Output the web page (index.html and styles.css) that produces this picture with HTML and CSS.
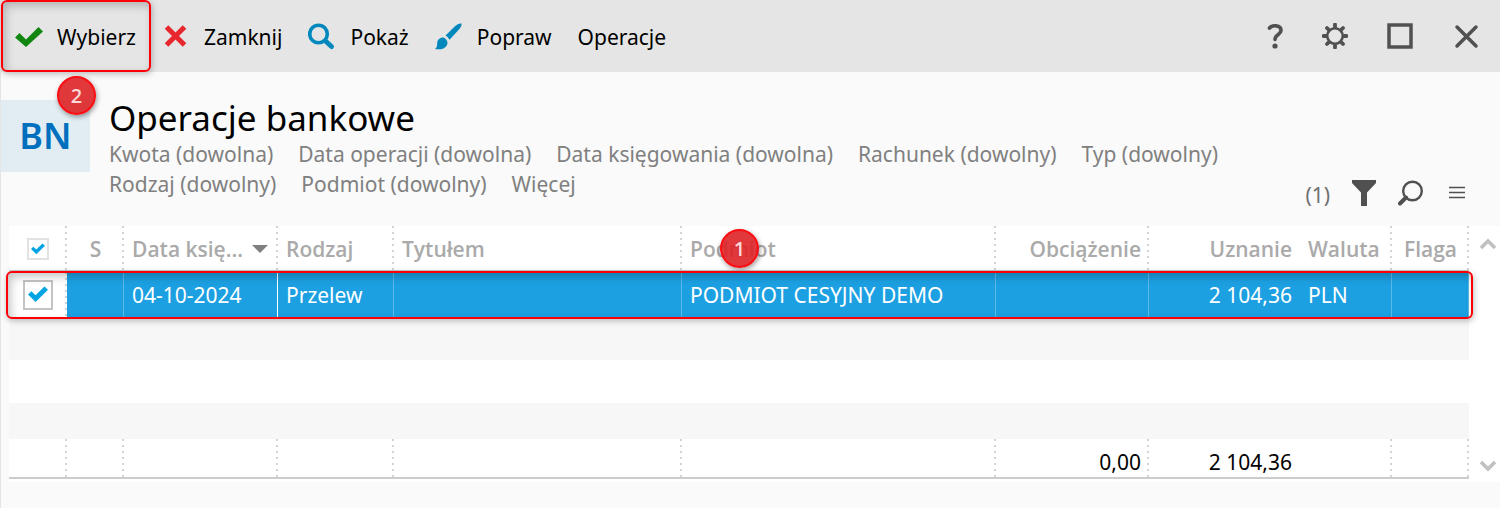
FILE: index.html
```html
<!DOCTYPE html>
<html lang="pl">
  <head>
    <meta charset="utf-8">
    <title>Operacje bankowe</title>
    <link rel="stylesheet" href="styles.css">
  </head>

  <body>
    <header class="toolbar">
      <div class="actions">
        <div class="step">
          <button type="button" class="action">
            <svg class="icon" viewBox="0 0 28 28"><path d="M0 14.500l4.500-4.500 6.500 6.500L23.500 4 28 8.500 11 24z" fill="#118611"/></svg>
            Wybierz
          </button>
          <span class="frame"></span>
          <span class="badge badge-step">2</span>
        </div>
        <button type="button" class="action">
          <svg class="icon" viewBox="0 0 28 28"><path d="M4.500 4l18 18M22.500 4l-18 18" stroke="#e8262d" stroke-width="5" fill="none"/></svg>
          Zamknij
        </button>
        <button type="button" class="action">
          <svg class="icon" viewBox="0 0 28 28"><g fill="none" stroke="#0288bd"><circle cx="10.500" cy="11" r="8.800" stroke-width="3.600"/><path d="M17.500 18l6 5.500" stroke-width="5" stroke-linecap="round"/></g></svg>
          Pokaż
        </button>
        <button type="button" class="action">
          <svg class="icon" viewBox="0 0 28 28"><path d="M26.500 .5C24.500 0 22 1.500 20 3.300L10.500 12.500c1.500 1 3 2.500 4 4.200L24 6.500c1.500-1.800 3-4 2.500-6z" fill="#0288bd"/><path d="M8.500 14.500c-4 0-6.300 2.500-6.300 5.500 0 3-.5 4.800-2.200 6 5 1 9.500 0 11.800-3.500 1.400-2.500.8-6-3.300-8z" fill="#0288bd"/></svg>
          Popraw
        </button>
        <button type="button" class="action">Operacje</button>
      </div>
      <div class="window-buttons">
        <button type="button" class="tool" aria-label="Pomoc">
          <svg width="16" height="28" viewBox="0 0 16 28"><path d="M2.500 6C5 3 14 2.500 14 8.500c0 4-6 4-6 9" fill="none" stroke="#505050" stroke-width="3.600" stroke-linecap="round"/><circle cx="8" cy="24" r="2.600" fill="#505050"/></svg>
        </button>
        <button type="button" class="tool" aria-label="Ustawienia">
          <svg width="26" height="26" viewBox="-13 -13 26 26"><g fill="none" stroke="#505050"><circle r="7.800" stroke-width="2.600"/><path d="M0-9v-2.500M0 9v2.500M-9 0h-2.500M9 0h2.500M-6.500-6.500l-1.500-1.500M6.500-6.500l1.500-1.500M-6.500 6.500l-1.500 1.500M6.500 6.500l1.500 1.500" stroke-width="3.800" stroke-linecap="round"/></g></svg>
        </button>
        <button type="button" class="tool" aria-label="Maksymalizuj">
          <svg width="26" height="26" viewBox="0 0 26 26"><path d="M2 2h22v22H2z" fill="none" stroke="#505050" stroke-width="3.500"/></svg>
        </button>
        <button type="button" class="tool" aria-label="Zamknij okno">
          <svg width="28" height="28" viewBox="0 0 28 28"><path d="M5 5l19 19M24 5l-19 19" stroke="#505050" stroke-width="3.500" stroke-linecap="round"/></svg>
        </button>
      </div>
    </header>

    <main class="content">
      <section class="heading">
        <div class="module">BN</div>
        <div class="heading-text">
          <h1>Operacje bankowe</h1>
          <nav class="filters">
            <a href="#">Kwota (dowolna)</a>
            <a href="#">Data operacji (dowolna)</a>
            <a href="#">Data księgowania (dowolna)</a>
            <a href="#">Rachunek (dowolny)</a>
            <a href="#">Typ (dowolny)</a>
            <a href="#">Rodzaj (dowolny)</a>
            <a href="#">Podmiot (dowolny)</a>
            <a href="#">Więcej</a>
          </nav>
        </div>
        <div class="list-tools">
          <span class="count">(1)</span>
          <button type="button" class="tool" aria-label="Filtruj">
            <svg width="24" height="26" viewBox="0 0 24 26"><path d="M0 0h24v3l-9 9.500V26H9V12.500L0 3z" fill="#505050"/></svg>
          </button>
          <button type="button" class="tool" aria-label="Szukaj">
            <svg width="28" height="28" viewBox="0 0 28 28"><g fill="none" stroke="#505050"><circle cx="14.500" cy="12" r="9.300" stroke-width="2.400"/><path d="M8 18.500l-6 6" stroke-width="4" stroke-linecap="round"/></g></svg>
          </button>
          <button type="button" class="tool" aria-label="Menu">
            <svg width="18" height="16" viewBox="0 0 18 16"><path d="M1 2.500h16M1 7.500h16M1 12.500h16" stroke="#505050" stroke-width="1.500"/></svg>
          </button>
        </div>
      </section>

      <section class="grid">
        <table>
          <colgroup>
            <col class="col-check">
            <col class="col-flag">
            <col class="col-date">
            <col class="col-kind">
            <col class="col-title">
            <col>
            <col class="col-debit">
            <col class="col-credit">
            <col class="col-currency">
            <col class="col-mark">
          </colgroup>
          <thead>
            <tr>
              <th class="center"><input type="checkbox" class="check" aria-label="Zaznacz wszystkie" checked></th>
              <th class="center">S</th>
              <th><span class="sorted">Data księ... <svg width="16" height="8" viewBox="0 0 16 8"><path d="M0 0h16L8 8z" fill="#808080"/></svg></span></th>
              <th>Rodzaj</th>
              <th>Tytułem</th>
              <th class="marked">Podmiot<span class="badge badge-row">1</span></th>
              <th class="right">Obciążenie</th>
              <th class="right no-line">Uznanie</th>
              <th>Waluta</th>
              <th class="center">Flaga</th>
            </tr>
          </thead>
          <tbody>
            <tr class="selected">
              <td class="center check-cell"><input type="checkbox" class="check check-large" aria-label="Zaznacz wiersz" checked></td>
              <td></td>
              <td class="strong-line">04-10-2024</td>
              <td>Przelew</td>
              <td></td>
              <td>PODMIOT CESYJNY DEMO</td>
              <td></td>
              <td class="right no-line">2 104,36</td>
              <td>PLN</td>
              <td></td>
            </tr>
            <tr class="empty striped"><td colspan="10"></td></tr>
            <tr class="empty"><td colspan="10"></td></tr>
            <tr class="empty striped last"><td colspan="10"></td></tr>
          </tbody>
          <tfoot>
            <tr>
              <td></td>
              <td></td>
              <td></td>
              <td></td>
              <td></td>
              <td></td>
              <td class="right">0,00</td>
              <td class="right no-line">2 104,36</td>
              <td></td>
              <td></td>
            </tr>
          </tfoot>
        </table>
        <div class="scroll">
          <button type="button" class="tool" aria-label="W górę">
            <svg width="16" height="12" viewBox="0 0 16 12"><path d="M1 10l7-7 7 7" fill="none" stroke="#c0c0c0" stroke-width="3.500"/></svg>
          </button>
          <button type="button" class="tool" aria-label="W dół">
            <svg width="16" height="12" viewBox="0 0 16 12"><path d="M1 2l7 7 7-7" fill="none" stroke="#c0c0c0" stroke-width="3.500"/></svg>
          </button>
        </div>
      </section>
    </main>
  </body>
</html>
```
FILE: styles.css
```css
body {
  margin: 0;
  background: #fafafa;
  color: #000;
  font: 21px/30px "Noto Sans", "Open Sans", sans-serif;
}
button {
  background: none;
  border: 0;
  padding: 0;
  color: inherit;
  font: inherit;
  cursor: pointer;
}
svg {
  display: block;
}

/* toolbar */
.toolbar {
  display: flex;
  justify-content: space-between;
  align-items: center;
  height: 72px;
  padding: 0 20px 0 15px;
  background: #e5e5e5;
}
.actions {
  display: flex;
  gap: 26px;
}
.action {
  display: flex;
  align-items: center;
  gap: 14px;
  height: 72px;
  padding-top: 1px;
}
.icon {
  width: 28px;
  height: 28px;
}
.step {
  position: relative;
}
.window-buttons {
  display: flex;
  align-items: center;
  gap: 39px;
}

/* step markers */
.frame,
.selected::after {
  content: "";
  position: absolute;
  box-sizing: border-box;
  border: 2px solid #fb0007;
  border-radius: 6px;
  box-shadow: 1px 2px 6px rgba(0, 0, 0, 0.25),
    inset 3px 4px 9px rgba(0, 0, 0, 0.22);
  pointer-events: none;
}
.frame {
  inset: 0 -15px 0 -14px;
}
.selected::after {
  inset: -1px -4px -2px -3px;
}
.badge {
  position: absolute;
  box-sizing: border-box;
  width: 39px;
  height: 39px;
  border: 2px solid #fb0d12;
  border-radius: 50%;
  background: rgba(221, 34, 38, 0.9);
  box-shadow: 1px 2px 5px rgba(0, 0, 0, 0.4);
  color: #fbd9d9;
  font: 600 20px/35px "Open Sans", sans-serif;
  text-align: center;
}
.badge-step {
  top: 76px;
  left: 42px;
}
.badge-row {
  top: 3px;
  left: 38px;
}

/* heading */
.content {
  border-left: 1px solid #e5e5e5;
  padding-bottom: 26px;
}
.heading {
  display: flex;
  height: 154px;
}
.module {
  width: 89px;
  height: 72px;
  margin-top: 28px;
  background: #e1edf3;
  color: #006fbe;
  font-size: 36px;
  font-weight: 600;
  line-height: 72px;
  text-align: center;
}
.heading-text {
  flex: 1;
  padding: 24px 19px 0;
}
h1 {
  margin: 0;
  font: 35px/43px "Noto Sans", "Open Sans", sans-serif;
}
.filters {
  display: flex;
  flex-wrap: wrap;
  column-gap: 25px;
}
.filters a {
  color: #808080;
  text-decoration: none;
}
.list-tools {
  display: flex;
  align-items: center;
  align-self: flex-end;
  gap: 22px;
  padding: 0 34px 16px 0;
  color: #707070;
}
.count {
  padding-top: 4px;
}

/* grid */
.grid {
  display: flex;
  margin-left: 8px;
  padding-bottom: 3px;
  background: #fff;
}
table {
  flex: 1;
  border-collapse: separate;
  border-spacing: 0;
  table-layout: fixed;
}
.col-check {
  width: 58px;
}
.col-flag {
  width: 57px;
}
.col-date {
  width: 154px;
}
.col-kind {
  width: 116px;
}
.col-title {
  width: 288px;
}
.col-debit {
  width: 153px;
}
.col-credit {
  width: 151px;
}
.col-currency {
  width: 92px;
}
.col-mark {
  width: 77px;
}
th,
td {
  box-sizing: border-box;
  padding: 0 10px 0 8px;
  text-align: left;
  white-space: nowrap;
}
th,
tfoot td,
.selected .check-cell {
  background: linear-gradient(#d4d4d4 2px, transparent 2px) right top / 2px 6px
    repeat-y #fff;
}
th {
  height: 46px;
  padding-top: 2px;
  border-bottom: 2px solid #ccc;
  color: #aaa;
  font-family: "Open Sans", "Noto Sans", sans-serif;
  font-weight: 600;
}
.center {
  padding-left: 0;
  padding-right: 0;
  text-align: center;
}
.right {
  padding-right: 8px;
  text-align: right;
}
th.no-line,
tfoot .no-line {
  background: #fff;
}
.sorted {
  display: flex;
  align-items: center;
  justify-content: space-between;
}
.marked {
  position: relative;
}
.selected {
  position: relative;
}
.selected td {
  height: 45px;
  border-right: 1px solid #5db9e8;
  background-color: #1ca0e2;
  color: #fff;
}
.selected .check-cell {
  border-right: 0;
  background-color: #fff;
}
.selected .strong-line {
  border-right: 1px solid #fff;
}
.selected .no-line {
  border-right: 0;
}
.empty td {
  height: 43px;
}
.empty.last td {
  height: 36px;
}
.striped td {
  background: #f7f7f7;
}
tfoot td {
  height: 40px;
  padding-top: 8px;
  border-bottom: 2px solid #ccc;
}

.check {
  appearance: none;
  display: block;
  box-sizing: border-box;
  width: 22px;
  height: 22px;
  margin: 0 auto;
  padding: 2px;
  border: 2px solid #e2e2e2;
  background: #fff;
}
.check-large {
  width: 30px;
  height: 30px;
  padding: 3px;
  border-color: #c4c4c4;
}
.check:checked::before {
  content: "";
  display: block;
  height: 100%;
  background: #02a4e3;
  clip-path: polygon(0 50%, 17% 34%, 38% 54%, 82% 10%, 100% 26%, 38% 88%);
}

.scroll {
  display: flex;
  flex-direction: column;
  justify-content: space-between;
  padding: 12px 4px 7px 11px;
}
.tool {
  display: block;
}
```
